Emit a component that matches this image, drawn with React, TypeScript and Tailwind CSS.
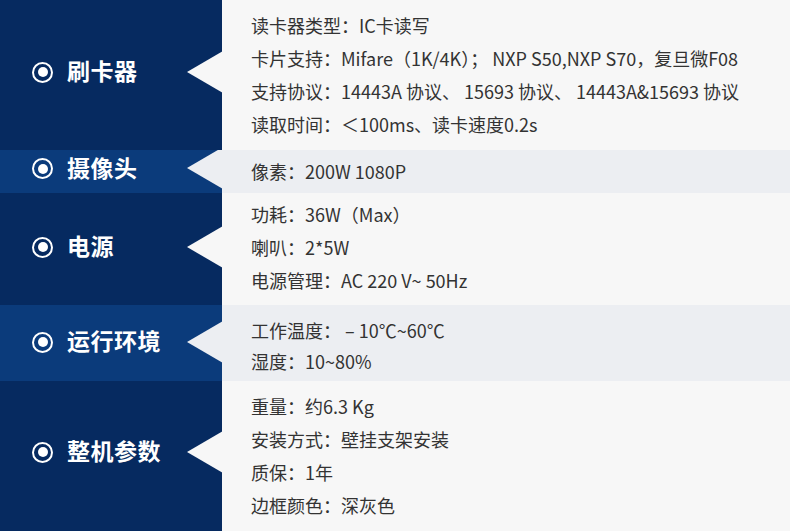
import React from 'react';

interface SpecRow {
  title: string;
  items: string[];
  height: number;
  alt: boolean;
  labelShift: string;
  arrowTop: string;
  listPad: string;
}

const rows: SpecRow[] = [
  {
    title: '刷卡器',
    items: [
      '读卡器类型：IC卡读写',
      '卡片支持：Mifare（1K/4K）； NXP S50,NXP S70，复旦微F08',
      '支持协议：14443A 协议、 15693 协议、 14443A&15693 协议',
      '读取时间：＜100ms、读卡速度0.2s',
    ],
    height: 150,
    alt: false,
    labelShift: '-translate-y-[3px]',
    arrowTop: 'top-[51px]',
    listPad: 'leading-[33px]',
  },
  {
    title: '摄像头',
    items: ['像素：200W 1080P'],
    height: 43,
    alt: true,
    labelShift: '-translate-y-[3px]',
    arrowTop: '-top-[3px]',
    listPad: 'leading-[33px]',
  },
  {
    title: '电源',
    items: ['功耗：36W（Max）', '喇叭：2*5W', '电源管理：AC 220 V~ 50Hz'],
    height: 112,
    alt: false,
    labelShift: '-translate-y-[2px]',
    arrowTop: 'top-[33px]',
    listPad: 'leading-[33px] pb-[4px]',
  },
  {
    title: '运行环境',
    items: ['工作温度： – 10℃~60℃', '湿度：10~80%'],
    height: 76,
    alt: true,
    labelShift: '-translate-y-[1px]',
    arrowTop: 'top-[16px]',
    listPad: 'leading-[31px] pt-[5px]',
  },
  {
    title: '整机参数',
    items: ['重量：约6.3 Kg', '安装方式：壁挂支架安装', '质保：1年', '边框颜色：深灰色'],
    height: 150,
    alt: false,
    labelShift: '-translate-y-[4px]',
    arrowTop: 'top-[50px]',
    listPad: 'leading-[33px]',
  },
];

export default function App() {
  return (
    <div
      className="w-[790px] h-[531px] overflow-hidden flex flex-col"
      style={{ fontFamily: '"Noto Sans CJK SC", "Noto Sans", sans-serif' }}
    >
      {rows.map((row) => (
        <div key={row.title} className="relative flex shrink-0 overflow-hidden" style={{ height: row.height }}>
          {/* Left label column */}
          <div
            className={`w-[222px] shrink-0 flex items-center ${row.alt ? 'bg-[#0b3b7b]' : 'bg-[#062a60]'}`}
          >
            <div className={`flex items-center pl-[32px] gap-[14px] ${row.labelShift}`}>
              <span className="w-[21px] h-[21px] rounded-full border-2 border-white flex items-center justify-center">
                <span className="w-[10px] h-[10px] rounded-full bg-white" />
              </span>
              <span className="text-white text-[23px] font-bold tracking-[0.5px] -mt-[3px]">{row.title}</span>
            </div>
          </div>

          {/* Pointer */}
          <div
            className={`absolute left-[187px] ${row.arrowTop} w-[36px] h-[42px] [clip-path:polygon(100%_0,0_50%,100%_100%)] ${
              row.alt ? 'bg-[#eceef2]' : 'bg-[#f7f7f7]'
            }`}
          />

          {/* Spec lines */}
          <div
            className={`flex-1 flex flex-col justify-center pl-[29px] text-[18px] text-[#333] ${
              row.alt ? 'bg-[#eceef2]' : 'bg-[#f7f7f7]'
            } ${row.listPad}`}
          >
            {row.items.map((item) => (
              <div key={item}>{item}</div>
            ))}
          </div>
        </div>
      ))}
    </div>
  );
}
